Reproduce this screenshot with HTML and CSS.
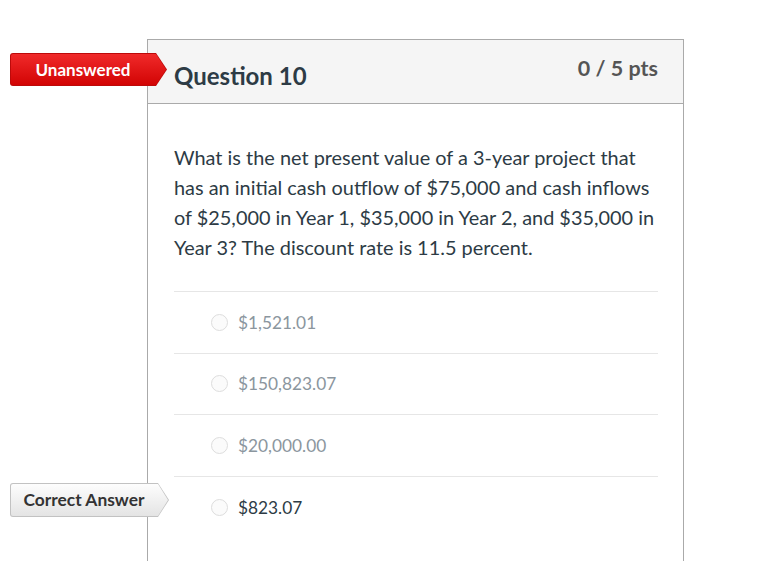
FILE: index.html
```html
<!DOCTYPE html>
<html lang="en">
<head>
    <meta charset="UTF-8">
    <title>Question 10</title>
    <link rel="stylesheet" href="styles.css">
</head>
<body>
    <div class="quiz">
        <div class="question">
            <span class="flag unanswered"><span class="face">Unanswered</span></span>
            <div class="header">
                <span class="name">Question 10</span>
                <span class="pts">0 / 5 pts</span>
            </div>
            <div class="content">
                <p class="text">What is the net present value of a 3-year project that has an initial cash outflow of $75,000 and cash inflows of $25,000 in Year 1, $35,000 in Year 2, and $35,000 in Year 3? The discount rate is 11.5 percent.</p>
                <div class="answers">
                    <div class="answer"><span class="radio"></span>$1,521.01</div>
                    <div class="answer"><span class="radio"></span>$150,823.07</div>
                    <div class="answer"><span class="radio"></span>$20,000.00</div>
                    <div class="answer correct"><span class="radio"></span>$823.07</div>
                </div>
            </div>
            <span class="flag right"><span class="face">Correct Answer</span></span>
        </div>
    </div>
</body>
</html>
```

FILE: styles.css
```css
body {
    margin: 0;
    font-family: Lato, "Open Sans", sans-serif;
    background: #fff;
    overflow: hidden;
}

.quiz {
    padding: 39px 0 0 147px;
}

.question {
    position: relative;
    width: 535px;
    height: 521px;
    border: 1px solid #aaaaaa;
    border-bottom: none;
}

.header {
    display: flex;
    justify-content: space-between;
    background-color: #f5f5f5;
    border-bottom: 1px solid #aaaaaa;
    height: 63px;
    padding: 0 25px 0 26px;
}
.header .name {
    font-size: 24px;
    font-weight: bold;
    color: #2d3b45;
    margin-top: 21px;
}
.header .pts {
    font-size: 21.5px;
    font-weight: bold;
    color: #555555;
    margin-top: 15px;
}

.content {
    padding: 0 25px 0 26px;
}
.text {
    margin: 0;
    padding: 38px 0 29px;
    font-size: 19.9px;
    line-height: 30px;
    color: #2d3b45;
    border-bottom: 1px solid #e6e6e6;
}

.answer {
    display: flex;
    align-items: center;
    height: 60.6px;
    border-bottom: 1px solid #e6e6e6;
    padding-left: 37px;
    font-size: 17.3px;
    color: #8b969e;
}
.answer.correct {
    border-bottom: none;
    color: #2d3b45;
}
.radio {
    width: 15px;
    height: 15px;
    border: 1px solid #dddddd;
    border-radius: 50%;
    background: #fbfbfb;
    margin-right: 10px;
}

/* ribbon flags hanging off the left edge */
.flag {
    position: absolute;
    left: -138px;
    clip-path: polygon(0 0, calc(100% - 11px) 0, 100% 50%, calc(100% - 11px) 100%, 0 100%);
    border-radius: 3px 0 0 3px;
}
.flag .face {
    position: absolute;
    top: 1px;
    left: 1px;
    right: 1px;
    bottom: 1px;
    padding-right: 11px;
    text-align: center;
    font-weight: bold;
    font-size: 17px;
    clip-path: polygon(0 0, calc(100% - 10px) 0, 100% 50%, calc(100% - 10px) 100%, 0 100%);
    border-radius: 2px 0 0 2px;
}
.flag.unanswered {
    top: 13px;
    width: 157px;
    height: 33px;
    background: #bd0a0a;
}
.flag.unanswered .face {
    line-height: 31px;
    color: #fff;
    background: linear-gradient(#f02a2a, #d20404);
}
.flag.right {
    top: 443px;
    width: 159px;
    height: 34px;
    background: #c2c2c2;
}
.flag.right .face {
    line-height: 32px;
    font-size: 17.4px;
    color: #333;
    background: linear-gradient(#fdfdfd, #e4e4e4);
}
```
